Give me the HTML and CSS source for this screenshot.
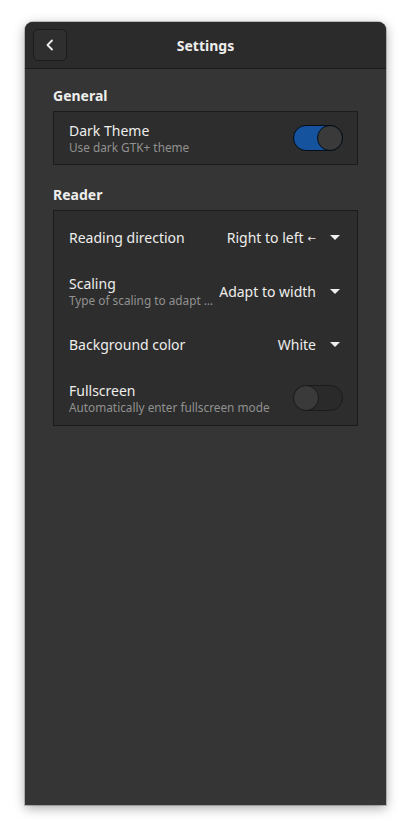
FILE: index.html
```html
<!DOCTYPE html>
<html>
<head>
<meta charset="utf-8">
<link rel="stylesheet" href="styles.css">
</head>
<body>
<div class="window">
  <header class="headerbar">
    <button class="back-btn" aria-label="Back">
      <svg width="16" height="16" viewBox="0 0 16 16"><path d="M10 3.5 L5.5 8 L10 12.5" fill="none" stroke="#eeeeec" stroke-width="1.8" stroke-linecap="round" stroke-linejoin="round"/></svg>
    </button>
    <div class="title">Settings</div>
  </header>
  <main class="content">
    <section class="group">
      <h2 class="group-title">General</h2>
      <div class="list">
        <div class="row single">
          <div class="labels">
            <div class="row-title">Dark Theme</div>
            <div class="row-sub">Use dark GTK+ theme</div>
          </div>
          <div class="switch on"><span class="knob"></span></div>
        </div>
      </div>
    </section>
    <section class="group">
      <h2 class="group-title">Reader</h2>
      <div class="list">
        <div class="row">
          <div class="labels"><div class="row-title">Reading direction</div></div>
          <div class="combo"><span>Right to left<span class="small-arrow">←</span></span><span class="arrow"></span></div>
        </div>
        <div class="row">
          <div class="labels">
            <div class="row-title">Scaling</div>
            <div class="row-sub">Type of scaling to adapt …</div>
          </div>
          <div class="combo"><span>Adapt to width</span><span class="arrow"></span></div>
        </div>
        <div class="row">
          <div class="labels"><div class="row-title">Background color</div></div>
          <div class="combo"><span>White</span><span class="arrow"></span></div>
        </div>
        <div class="row">
          <div class="labels">
            <div class="row-title">Fullscreen</div>
            <div class="row-sub">Automatically enter fullscreen mode</div>
          </div>
          <div class="switch"><span class="knob"></span></div>
        </div>
      </div>
    </section>
  </main>
</div>
</body>
</html>
```

FILE: styles.css
```css
html, body {
  margin: 0;
  padding: 0;
  background: #ffffff;
}
body {
  font-family: "Noto Sans", "Open Sans", sans-serif;
  color: #eeeeec;
  padding: 22px 26px 29px 25px;
}
.window {
  width: 361px;
  height: 783px;
  background: #353535;
  border-radius: 8px 8px 0 0;
  box-shadow: 0 3px 12px rgba(0,0,0,0.35), 0 0 0 1px rgba(0,0,0,0.2);
  display: flex;
  flex-direction: column;
  overflow: hidden;
}
.headerbar {
  height: 46px;
  background: #2b2b2b;
  border-bottom: 1px solid #1b1b1b;
  display: flex;
  align-items: center;
  position: relative;
  flex-shrink: 0;
}
.back-btn {
  margin-left: 8px;
  width: 34px;
  height: 32px;
  border-radius: 5px;
  border: 1px solid #1c1c1c;
  background: #2f2f2f;
  display: flex;
  align-items: center;
  justify-content: center;
  padding: 0;
}
.title {
  position: absolute;
  left: 0;
  right: 0;
  text-align: center;
  font-weight: bold;
  font-size: 14px;
  pointer-events: none;
}
.content {
  padding: 18px 28px 0 28px;
}
.group {
  margin-bottom: 21px;
}
.group-title {
  margin: 0 0 6px 0;
  font-size: 14px;
  font-weight: bold;
  line-height: 18px;
}
.list {
  border: 1px solid #1b1b1b;
  background: #2d2d2d;
}
.row {
  height: 53.5px;
  padding: 0 14px 0 15px;
  display: flex;
  align-items: center;
  justify-content: space-between;
}
.row.single {
  height: 52px;
}
.labels {
  display: flex;
  flex-direction: column;
  min-width: 0;
}
.row-title {
  font-size: 14px;
  line-height: 18px;
}
.row-sub {
  font-size: 11.8px;
  line-height: 15px;
  color: #919190;
  white-space: nowrap;
}
.combo {
  display: flex;
  align-items: center;
  font-size: 14px;
  white-space: nowrap;
}
.small-arrow {
  font-family: "DejaVu Sans", sans-serif;
  font-size: 10px;
  position: relative;
  top: -1px;
  margin-left: 4px;
}
.arrow {
  width: 0;
  height: 0;
  border-left: 5px solid transparent;
  border-right: 5px solid transparent;
  border-top: 5px solid #eeeeec;
  margin-left: 14px;
  margin-right: 3px;
}
.switch {
  width: 48px;
  height: 24px;
  border-radius: 13px;
  border: 1px solid #1b1b1b;
  background: #2a2a2a;
  position: relative;
  flex-shrink: 0;
}
.switch.on {
  background: #15539e;
  border-color: #030c17;
}
.knob {
  position: absolute;
  top: -1px;
  left: -1px;
  width: 24px;
  height: 24px;
  border-radius: 50%;
  background: #3a3a3a;
  border: 1px solid #1b1b1b;
}
.switch.on .knob {
  left: auto;
  right: -1px;
  border-color: #030c17;
}
```
